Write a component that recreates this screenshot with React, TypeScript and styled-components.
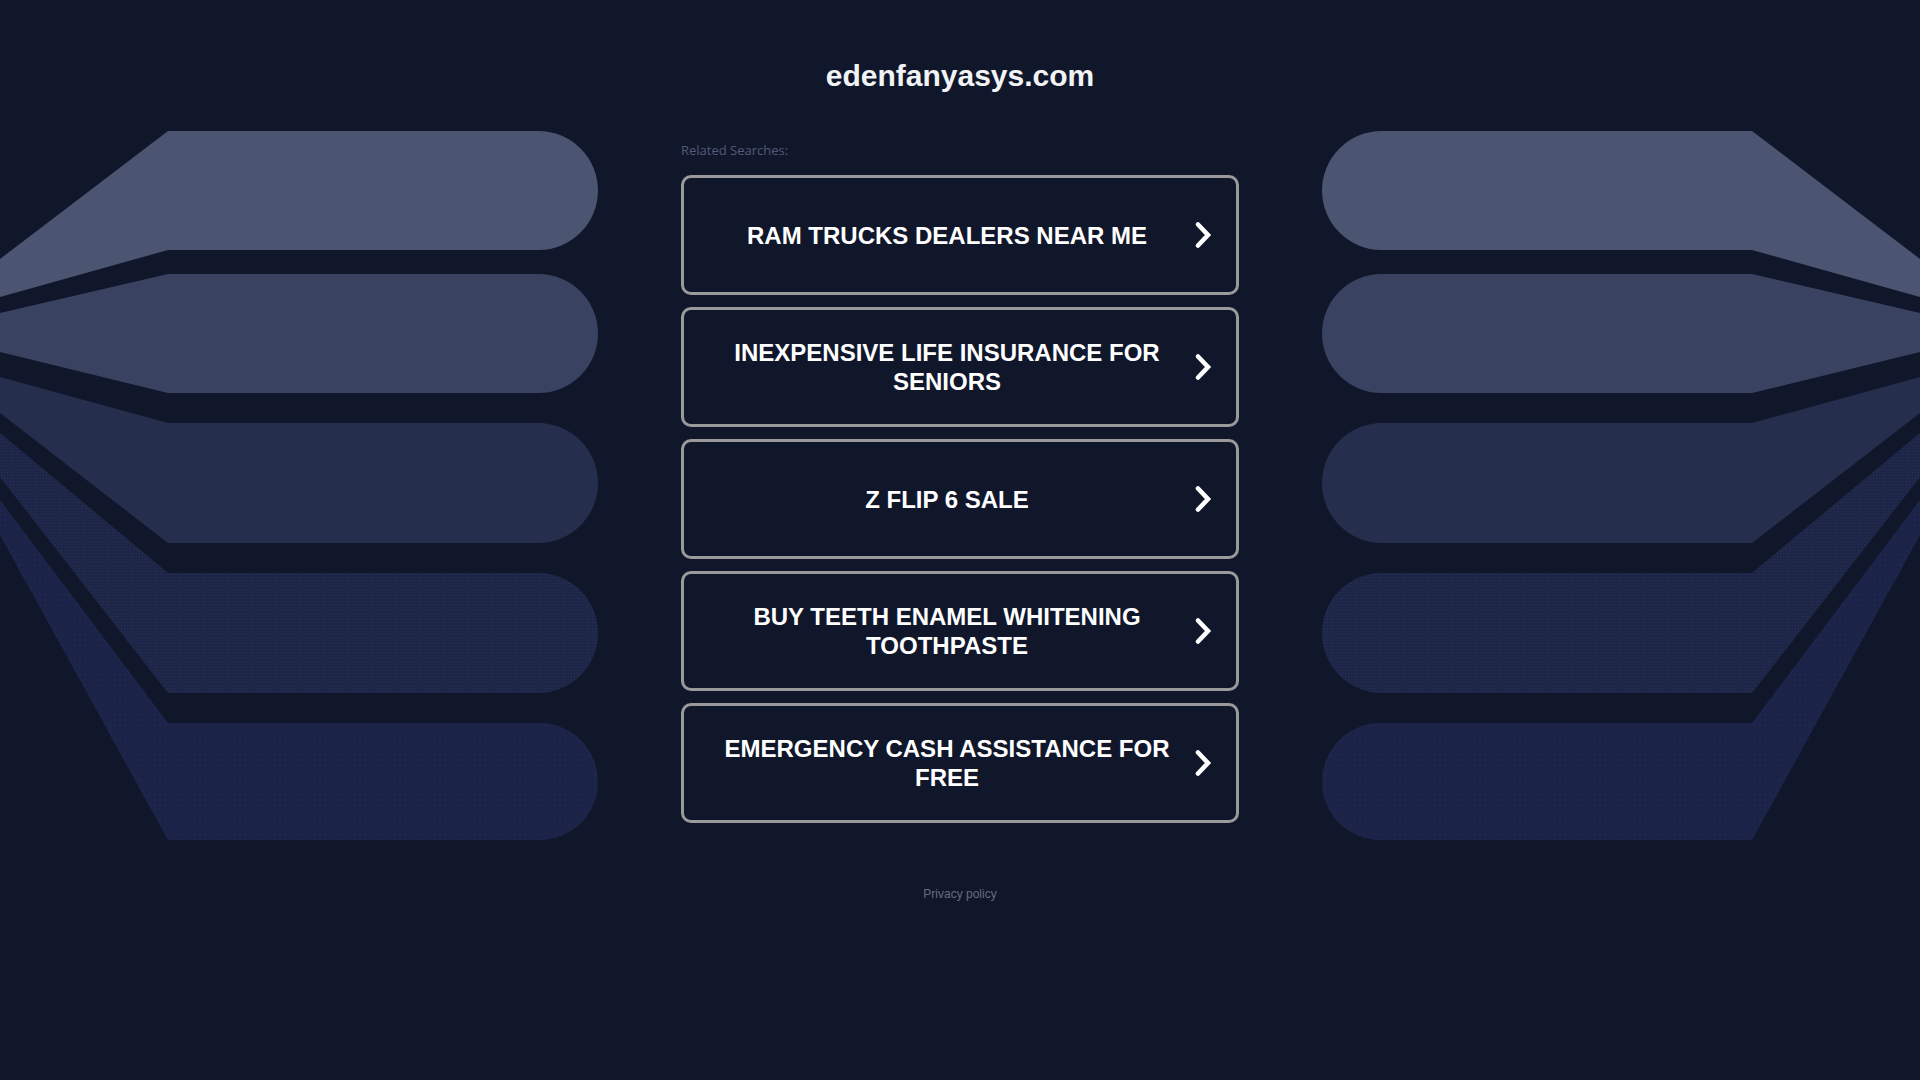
import React from 'react'
import styled, { createGlobalStyle } from 'styled-components'

const GlobalStyle = createGlobalStyle`
  html, body {
    margin: 0;
    padding: 0;
    background: #11172b;
  }
  body {
    font-family: 'Liberation Sans', Arial, sans-serif;
    color: #fff;
  }
`

const Page = styled.div`
  display: grid;
  grid-template-columns: 1fr 558px 1fr;
  min-height: 1080px;
  background: #11172b;
`

const Side = styled.div<{ $mirrored?: boolean }>`
  overflow: hidden;
  display: flex;
  justify-content: ${({ $mirrored }) => ($mirrored ? 'flex-end' : 'flex-start')};

  & svg {
    display: block;
    flex-shrink: 0;
    transform: ${({ $mirrored }) => ($mirrored ? 'scaleX(-1)' : 'none')};
  }
`

const Center = styled.main`
  display: flex;
  flex-direction: column;
  padding-top: 58px;
`

const Title = styled.h1`
  margin: 0;
  font-size: 30px;
  line-height: 36px;
  font-weight: bold;
  text-align: center;
  color: #f2f3f5;
`

const Label = styled.div`
  margin-top: 48px;
  font-family: 'Open Sans', 'Liberation Sans', sans-serif;
  font-size: 13px;
  line-height: 17px;
  color: #525a77;
`

const List = styled.div`
  display: flex;
  flex-direction: column;
  gap: 12px;
  margin-top: 16px;
`

const Item = styled.a`
  box-sizing: border-box;
  height: 120px;
  display: flex;
  align-items: center;
  padding: 0 20px;
  border: 3px solid #9a9a9a;
  border-radius: 10px;
  background: #11172b;
  color: #fff;
  text-decoration: none;
  cursor: pointer;

  & .text {
    flex: 1;
    min-width: 0;
    text-align: center;
    font-size: 24px;
    line-height: 29px;
    font-weight: bold;
    text-transform: uppercase;
  }

  & svg {
    flex-shrink: 0;
    display: block;
  }
`

const Footer = styled.div`
  margin-top: 64px;
  text-align: center;
  font-size: 12px;
  line-height: 14px;

  & a {
    color: #676c7c;
    text-decoration: none;
  }
`

const Chevron = () => (
  <svg width="26" height="30" viewBox="0 0 26 30">
    <polyline
      points="8,4.5 18,15 8,25.5"
      fill="none"
      stroke="#fff"
      strokeWidth="4.6"
      strokeLinecap="round"
      strokeLinejoin="miter"
    />
  </svg>
)

// bands of the backdrop, in page coordinates (left side; right side is mirrored)
const bands = [
  { top: 131, bottom: 250, l1: 259, l2: 297, fill: '#4b5571' },
  { top: 274, bottom: 393, l1: 313, l2: 352, fill: '#3a4261' },
  { top: 423, bottom: 543, l1: 377, l2: 413, fill: '#262e4d' },
  { top: 573, bottom: 693, l1: 433, l2: 477, fill: '#1e2647', dots: 'fine' },
  { top: 723, bottom: 840, l1: 500, l2: 535, fill: '#1c2549', dots: 'coarse' },
]

const Backdrop = () => (
  <svg width="681" height="880" viewBox="0 0 681 880">
    <defs>
      <pattern id="fine" width="3" height="3" patternUnits="userSpaceOnUse">
        <rect width="3" height="3" fill="#1e2647" />
        <rect x="1" y="1" width="1" height="1" fill="#27305a" />
      </pattern>
      <pattern id="coarse" width="5" height="5" patternUnits="userSpaceOnUse">
        <rect width="5" height="5" fill="#1c2549" />
        <rect x="2" y="2" width="1" height="1" fill="#141b36" />
      </pattern>
    </defs>
    {bands.map((b, i) => {
      const r = (b.bottom - b.top) / 2
      const cx = 598 - r
      const d = `M0,${b.l1} L168,${b.top} L${cx},${b.top} A${r},${r} 0 0 1 ${cx},${b.bottom} L168,${b.bottom} L0,${b.l2} Z`
      return <path key={i} d={d} fill={b.dots ? `url(#${b.dots})` : b.fill} />
    })}
  </svg>
)

const searches = [
  'Ram Trucks Dealers Near Me',
  'Inexpensive Life Insurance for Seniors',
  'Z Flip 6 Sale',
  'Buy Teeth Enamel Whitening Toothpaste',
  'Emergency Cash Assistance for Free',
]

const App = () => {
  return (
    <>
      <GlobalStyle />
      <Page>
        <Side>
          <Backdrop />
        </Side>
        <Center>
          <Title>edenfanyasys.com</Title>
          <Label>Related Searches:</Label>
          <List>
            {searches.map((s) => (
              <Item key={s}>
                <span className="text">{s}</span>
                <Chevron />
              </Item>
            ))}
          </List>
          <Footer>
            <a>Privacy policy</a>
          </Footer>
        </Center>
        <Side $mirrored>
          <Backdrop />
        </Side>
      </Page>
    </>
  )
}

export default App
